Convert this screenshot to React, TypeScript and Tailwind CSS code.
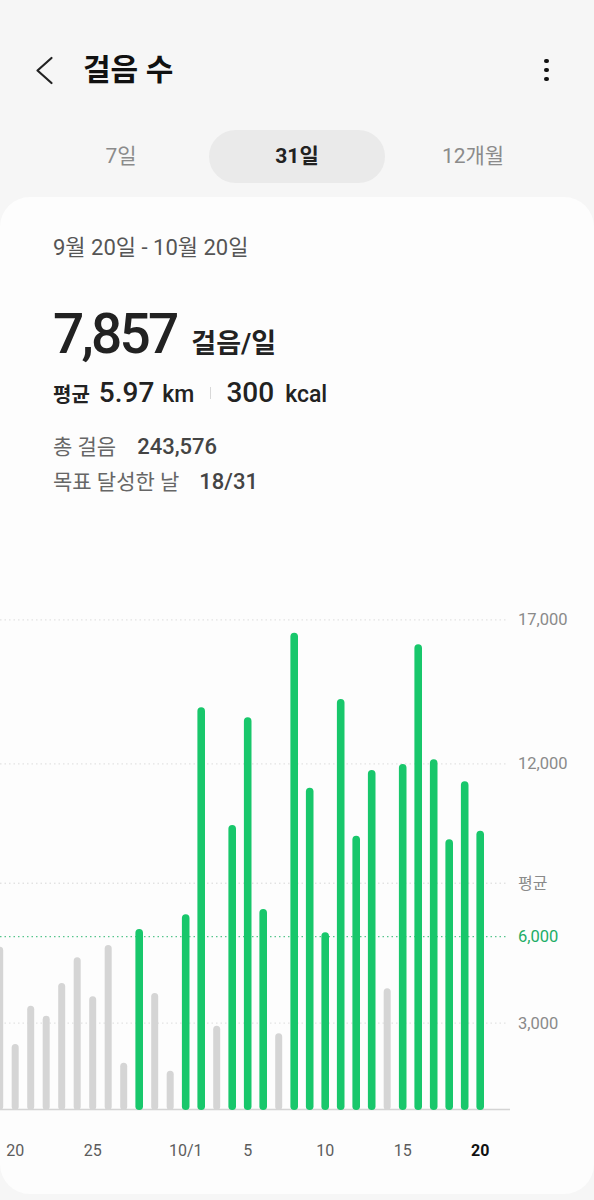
import React from "react";

const steps = [
  5653, 2274, 3604, 3257, 4392, 5285, 3931, 5712, 1625, 6267, 4045, 1347, 6778, 13965, 2910, 9878,
  13618, 6962, 2646, 16556, 11174, 6153, 14253, 9507, 11788, 4208, 11997, 16153, 12160, 9382, 11396, 9681,
];

const GOAL = 6000;
const AVG = 7857;
const BASE = 519.5;
const yOf = (v: number) => BASE - v * 0.0288;
const xOf = (i: number) => i * 15.5 - 0.3;

const xLabels = [
  { i: 1, t: "20" },
  { i: 6, t: "25" },
  { i: 12, t: "10/1" },
  { i: 16, t: "5" },
  { i: 21, t: "10" },
  { i: 26, t: "15" },
  { i: 31, t: "20", bold: true },
];

function StepsChart() {
  const grid = [
    { v: 17000, label: "17,000" },
    { v: 12000, label: "12,000" },
    { v: 3000, label: "3,000" },
  ];
  return (
    <svg width="594" height="590" viewBox="0 0 594 590" className="block">
      {grid.map((g) => (
        <g key={g.v}>
          <line x1="0" x2="508" y1={yOf(g.v)} y2={yOf(g.v)} stroke="#dcdcdc" strokeWidth="1" strokeDasharray="1.5 3" />
          <text x="518" y={yOf(g.v)} dominantBaseline="central" fontSize="16.5" fill="#8a8a8a">
            {g.label}
          </text>
        </g>
      ))}
      {/* average line */}
      <line x1="0" x2="508" y1={yOf(AVG)} y2={yOf(AVG)} stroke="#d6d6d6" strokeWidth="1" strokeDasharray="1.5 3" />
      <text x="518" y={yOf(AVG)} dominantBaseline="central" fontSize="16" fill="#8a8a8a">
        평균
      </text>
      {/* goal line */}
      <line x1="0" x2="508" y1={yOf(GOAL)} y2={yOf(GOAL)} stroke="#2fb872" strokeWidth="1" strokeDasharray="1.5 3" />
      <text x="518" y={yOf(GOAL)} dominantBaseline="central" fontSize="16.5" fill="#21ad66">
        6,000
      </text>
      <line x1="0" x2="510" y1={BASE} y2={BASE} stroke="#d4d4d4" strokeWidth="1.5" />
      {steps.map((v, i) => {
        const top = yOf(v);
        const green = v >= GOAL;
        const w = green ? 7.6 : 7;
        return (
          <rect
            key={i}
            x={xOf(i) - w / 2}
            y={top}
            width={w}
            height={BASE - top + 0.5}
            rx={w / 2}
            fill={green ? "#18c76b" : "#d5d5d5"}
          />
        );
      })}
      {xLabels.map((l) => (
        <text
          key={l.i}
          x={xOf(l.i)}
          y="560"
          textAnchor="middle"
          dominantBaseline="central"
          fontSize="16"
          fontWeight={l.bold ? 700 : 400}
          fill={l.bold ? "#111" : "#5c5c5c"}
        >
          {l.t}
        </text>
      ))}
    </svg>
  );
}

export default function App() {
  const tabs = [
    { label: "7일", active: false },
    { label: "31일", active: true },
    { label: "12개월", active: false },
  ];

  return (
    <div className="w-[594px] h-[1200px] overflow-hidden bg-[#f6f6f6] pt-[42px] font-['Roboto','Noto_Sans_CJK_KR',sans-serif]">
      {/* header */}
      <div className="h-[56px] flex items-center relative">
        <svg width="20" height="30" viewBox="0 0 20 30" className="ml-[34px]">
          <polyline points="17.5,3 3.5,15.5 17.5,28" fill="none" stroke="#222" strokeWidth="2.2" strokeLinecap="round" strokeLinejoin="round" />
        </svg>
        <h1 className="ml-[29px] text-[30px] font-bold text-[#111] leading-none">걸음 수</h1>
        <div className="ml-auto mr-[45px] flex flex-col gap-[4.5px]">
          <span className="w-[4.6px] h-[4.6px] rounded-full bg-[#111]" />
          <span className="w-[4.6px] h-[4.6px] rounded-full bg-[#111]" />
          <span className="w-[4.6px] h-[4.6px] rounded-full bg-[#111]" />
        </div>
      </div>

      {/* period tabs */}
      <div className="mt-[32px] h-[53px] px-[33px] flex">
        {tabs.map((t) => (
          <div
            key={t.label}
            className={
              t.active
                ? "flex-1 rounded-full bg-[#eaeaea] flex items-center justify-center text-[21px] font-bold text-[#222]"
                : "flex-1 flex items-center justify-center text-[21px] text-[#8b8b8b]"
            }
          >
            {t.label}
          </div>
        ))}
      </div>

      {/* card */}
      <div className="mt-[14px] bg-[#fdfdfd] rounded-[30px] pt-[34px] pb-[14px]">
        <div className="pl-[53px]">
          <div className="h-[34px] leading-[34px] text-[22px] text-[#555]">9월 20일 - 10월 20일</div>

          <div className="mt-[41px] h-[56px] flex items-baseline">
            <span className="text-[55px] leading-[56px] font-medium tracking-[-2.8px] text-[#222]">7,857</span>
            <span className="ml-[15px] text-[27px] font-semibold text-[#222]">걸음/일</span>
          </div>

          <div className="mt-[16px] h-[30px] leading-[30px] flex items-baseline text-[#222]">
            <span className="text-[20px] font-bold">평균</span>
            <span className="ml-[9px] text-[28px] font-medium">5.97</span>
            <span className="ml-[8px] text-[23px] font-medium">km</span>
            <span className="ml-[16px] self-center w-px h-[12px] bg-[#d8d8d8]" />
            <span className="ml-[15px] text-[28px] font-medium">300</span>
            <span className="ml-[11px] text-[23px] font-medium">kcal</span>
          </div>

          <div className="mt-[21px] h-[35px] leading-[35px] flex items-baseline">
            <span className="text-[21px] text-[#666]">총 걸음</span>
            <span className="ml-[21px] text-[22px] font-medium text-[#444]">243,576</span>
          </div>
          <div className="h-[35px] leading-[35px] flex items-baseline">
            <span className="text-[21px] text-[#666]">목표 달성한 날</span>
            <span className="ml-[20px] text-[22px] font-medium text-[#444]">18/31</span>
          </div>
        </div>

        <div className="mt-[91px]">
          <StepsChart />
        </div>
      </div>
    </div>
  );
}
